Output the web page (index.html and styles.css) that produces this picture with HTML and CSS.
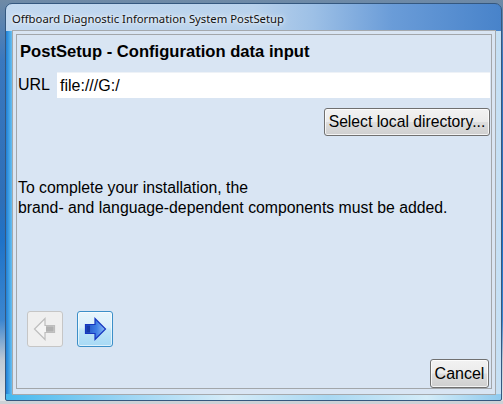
FILE: index.html
```html
<!DOCTYPE html>
<html>
<head>
<meta charset="utf-8">
<link rel="stylesheet" href="styles.css">
</head>
<body>
<div class="desktop">
  <div class="window">
    <div class="titlebar"><span class="title">Offboard Diagnostic Information System PostSetup</span></div>
    <div class="client">
      <div class="panel">
        <h1 class="heading">PostSetup - Configuration data input</h1>
        <div class="url-row">
          <span class="url-label">URL</span>
          <div class="url-input">file:///G:/</div>
        </div>
        <button class="btn select-btn">Select local directory...</button>
        <p class="info">To complete your installation, the<br>brand- and language-dependent components must be added.</p>
        <div class="nav-row">
          <div class="nav-btn nav-back">
            <svg width="36" height="36" viewBox="0 0 36 36">
              <path d="M27.5 14.5 H18 V7.5 L7.5 18 L18 28.5 V21.5 H27.5 Z" fill="#f4f4f4" stroke="#bdbdbd" stroke-width="1.2"/>
              <path d="M19 15.2 H26.8 V20.8 H19 Z" fill="#b0b0b0"/>
            </svg>
          </div>
          <div class="nav-btn nav-next">
            <svg width="36" height="36" viewBox="0 0 36 36">
              <defs>
                <linearGradient id="ag" x1="0" y1="0" x2="1" y2="0">
                  <stop offset="0" stop-color="#1d4fc4"/>
                  <stop offset="0.55" stop-color="#3f7fe6"/>
                  <stop offset="1" stop-color="#8fc0f6"/>
                </linearGradient>
              </defs>
              <path d="M8.5 13.5 H18 V7.5 L28.5 18 L18 28.5 V22.5 H8.5 Z" fill="url(#ag)" stroke="#1636c0" stroke-width="1.2" stroke-linejoin="miter"/>
              <path d="M9.5 14.5 H13 V21.5 H9.5 Z" fill="#163aa8"/>
            </svg>
          </div>
        </div>
        <button class="btn cancel-btn">Cancel</button>
      </div>
    </div>
  </div>
</div>
</body>
</html>
```

FILE: styles.css
```css
html, body {
  margin: 0;
  padding: 0;
}

body {
  width: 503px;
  height: 404px;
  overflow: hidden;
}

.desktop {
  width: 503px;
  height: 404px;
  overflow: hidden;
  display: flex;
  flex-direction: column;
  background:
    linear-gradient(to bottom, transparent 0, transparent 401px, #cdd1d6 401px),
    linear-gradient(to bottom, #6f8aa6 0, #3a78bf 60px, #2e6fb8 200px, #1f73c8 240px, #3c86cf 320px, #bfc9d4 360px, #e0e4e8 400px);
}

.window {
  box-sizing: border-box;
  width: 497px;
  height: 398px;
  margin: 3px 1px 0 5px;
  border: 1px solid #35587f;
  border-radius: 7px 7px 2px 2px;
  display: grid;
  grid-template-rows: 26px 1fr;
  background:
    linear-gradient(90deg, #46b9ee 0%, #9ed6f4 25%, #d6ecf8 45%, #a9d8f2 65%, #d4ecf8 85%, #8fcaee 100%) bottom / 100% 6px no-repeat,
    linear-gradient(90deg, #c3d9f0 0%, #b9d2ec 50%, #9dc0e6 62%, #6a9cd8 78%, #4883ca 100%) top / 100% 27px no-repeat,
    linear-gradient(90deg, #1f7fd6 0, #58b6ee 5px, #a4cbea 8px, #b5d4ee 60%, #c6e0f4 100%);
}

.titlebar {
  padding-left: 6px;
  display: flex;
  align-items: center;
}

.title {
  font-family: "Noto Sans", "Open Sans", sans-serif;
  font-size: 11.3px;
  color: #111;
  line-height: 16px;
  margin-top: 3px;
  text-shadow: 0 0 6px rgba(255, 255, 255, 0.9), 0 0 3px rgba(255, 255, 255, 0.9);
}

.client {
  margin: 0 5px 5px 6px;
  border: 1px solid #a5a9ad;
  background: #d9e5f3;
  padding: 3px 3px 5px 3px;
  display: flex;
}

.panel {
  flex: 1;
  border: 1px solid #a2a6aa;
  display: flex;
  flex-direction: column;
  font-family: "Liberation Sans", Arial, sans-serif;
  font-size: 16px;
  color: #000;
}

.heading {
  margin: 7px 0 0 0;
  padding-left: 3px;
  font-size: 16.6px;
  font-weight: bold;
  line-height: 19px;
}

.url-row {
  margin-top: 11px;
  height: 26px;
  display: flex;
  align-items: center;
  padding: 0 1px 0 1px;
}

.url-label {
  width: 39px;
  line-height: 26px;
}

.url-input {
  flex: 1;
  height: 26px;
  box-sizing: border-box;
  background: #fff;
  border-top: 1px solid #eef2f7;
  padding: 1px 0 0 3px;
  line-height: 24px;
}

.btn {
  font-family: "Liberation Sans", Arial, sans-serif;
  font-size: 16px;
  color: #000;
  border: 1px solid #707070;
  border-radius: 3px;
  background: linear-gradient(to bottom, #f2f2f2 0%, #ebebeb 48%, #dddddd 52%, #cfcfcf 100%);
  box-shadow: inset 0 0 0 1px rgba(255, 255, 255, 0.75);
  padding: 0;
  box-sizing: border-box;
}

.select-btn {
  align-self: flex-end;
  margin: 10px 1px 0 0;
  width: 166px;
  height: 28px;
  font-size: 15.7px;
}

.info {
  margin: 42px 0 0 0;
  padding-left: 1px;
  font-size: 15.8px;
  line-height: 20px;
}

.nav-row {
  margin-top: 93px;
  padding-left: 10px;
  display: flex;
  gap: 14px;
}

.nav-btn {
  width: 36px;
  height: 36px;
  box-sizing: border-box;
  border-radius: 3px;
  display: flex;
  align-items: center;
  justify-content: center;
  overflow: visible;
}

.nav-btn svg {
  display: block;
  flex: none;
}

.nav-back {
  border: 1px solid #c6c6c6;
  background: #efefef;
}

.nav-next {
  border: 1px solid #3c8fc8;
  background: linear-gradient(to bottom, #e8f5fc 0%, #d9f0fb 45%, #bde4f7 55%, #a7d9f5 100%);
  box-shadow: inset 0 0 0 1px rgba(255, 255, 255, 0.6);
}

.cancel-btn {
  align-self: flex-end;
  margin: 12px 2px 0 0;
  width: 59px;
  height: 29px;
}
```
